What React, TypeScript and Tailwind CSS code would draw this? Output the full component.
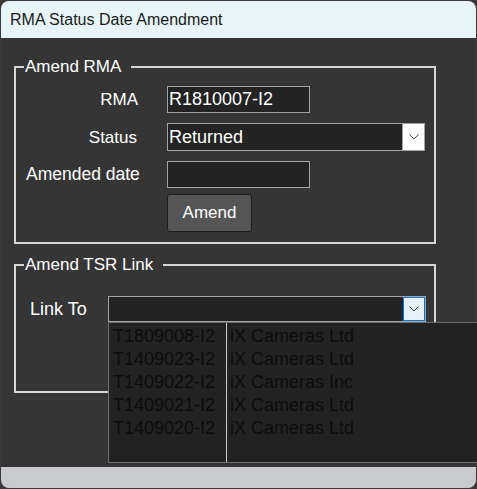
import React from 'react'

const LINKS = [
  { tsr: 'T1809008-I2', customer: 'iX Cameras Ltd' },
  { tsr: 'T1409023-I2', customer: 'iX Cameras Ltd' },
  { tsr: 'T1409022-I2', customer: 'iX Cameras Inc' },
  { tsr: 'T1409021-I2', customer: 'iX Cameras Ltd' },
  { tsr: 'T1409020-I2', customer: 'iX Cameras Ltd' },
]

function Chevron({ color }: { color: string }) {
  return (
    <svg width="10" height="6" viewBox="0 0 10 6" fill="none">
      <polyline points="0.5,0.5 5,5 9.5,0.5" stroke={color} strokeWidth="1" />
    </svg>
  )
}

export default function App() {
  return (
    <div className="w-[477px] h-[489px] bg-[#3a3a3a] pt-px pl-px font-['Liberation_Sans',Arial,sans-serif]">
      <div className="w-[475px] h-[487px] flex flex-col">
        {/* ── Title bar ── */}
        <div className="h-[37px] shrink-0 flex items-center px-[9px] bg-[#e7f5f8] rounded-t-[8px] text-[16px] text-[#1b1b1b]">
          RMA Status Date Amendment
        </div>

        {/* ── Body ── */}
        <div className="flex-1 bg-[#353535] pt-[19px] px-[13px] text-white text-[17px]">
          {/* Amend RMA */}
          <fieldset className="w-[422px] border-2 border-[#d6d6d6] pb-[10px]">
            <legend className="ml-[8px] pl-[1px] pr-[10px] leading-[20px]">Amend RMA</legend>
            <div className="grid grid-cols-[126px_1fr] gap-x-[25px] pt-[9px] items-center">
              <div className="text-right leading-none pr-[4px]">RMA</div>
              <div className="w-[143px] h-[27px] bg-[#232323] border border-[#a3a3a3] flex items-center pl-[1px] text-[18px]">
                R1810007-I2
              </div>

              <div className="text-right leading-none mt-[10px] pr-[5px]">Status</div>
              <div className="mt-[10px] w-[258px] h-[28px] bg-[#232323] border border-[#a3a3a3] flex items-center text-[18px]">
                <span className="flex-1 pl-[1px]">Returned</span>
                <span className="w-[22px] h-full bg-white border-l border-[#a3a3a3] flex items-center justify-center">
                  <Chevron color="#444" />
                </span>
              </div>

              <div className="leading-none mt-[10px] pl-[10px] whitespace-nowrap text-[17.5px]">Amended date</div>
              <div className="mt-[10px] w-[143px] h-[27px] bg-[#232323] border border-[#a3a3a3]" />

              <div />
              <button className="mt-[6px] w-[85px] h-[38px] bg-[#555555] border border-[#1c1c1c] rounded-[3px] text-white">
                Amend
              </button>
            </div>
          </fieldset>

          {/* Amend TSR Link */}
          <fieldset className="mt-[11px] w-[422px] h-[138px] border-2 border-[#d6d6d6]">
            <legend className="ml-[8px] pl-[1px] pr-[10px] leading-[20px]">Amend TSR Link</legend>
            <div className="flex items-center pt-[21px]">
              <div className="w-[92px] pl-[14px] leading-none text-[18px]">Link To</div>
              <div className="relative w-[318px] h-[26px] bg-[#232323] border border-[#a3a3a3] flex">
                <span className="flex-1" />
                <span className="w-[22px] h-full bg-[#e5f1fb] border border-[#0078d7] flex items-center justify-center">
                  <Chevron color="#333" />
                </span>

                {/* open dropdown list */}
                <div className="absolute left-[-1px] top-[25px] w-[372px] h-[141px] bg-[#222222] border border-[#6e6e6e] flex text-[#0c0c0c] text-[18px] z-10">
                  <div className="w-[118px] pt-[2px] pl-[4px] border-r border-[#cfcfcf] whitespace-nowrap overflow-hidden">
                    {LINKS.map((l) => (
                      <div key={l.tsr} className="h-[23px] flex items-center">{l.tsr}</div>
                    ))}
                  </div>
                  <div className="flex-1 pt-[2px] pl-[3px] whitespace-nowrap">
                    {LINKS.map((l, i) => (
                      <div key={i} className="h-[23px] flex items-center">{l.customer}</div>
                    ))}
                  </div>
                </div>
              </div>
            </div>
          </fieldset>
        </div>

        {/* ── Bottom strip ── */}
        <div className="h-[21px] shrink-0 bg-[#c9cacd] rounded-b-[8px]" />
      </div>
    </div>
  )
}
